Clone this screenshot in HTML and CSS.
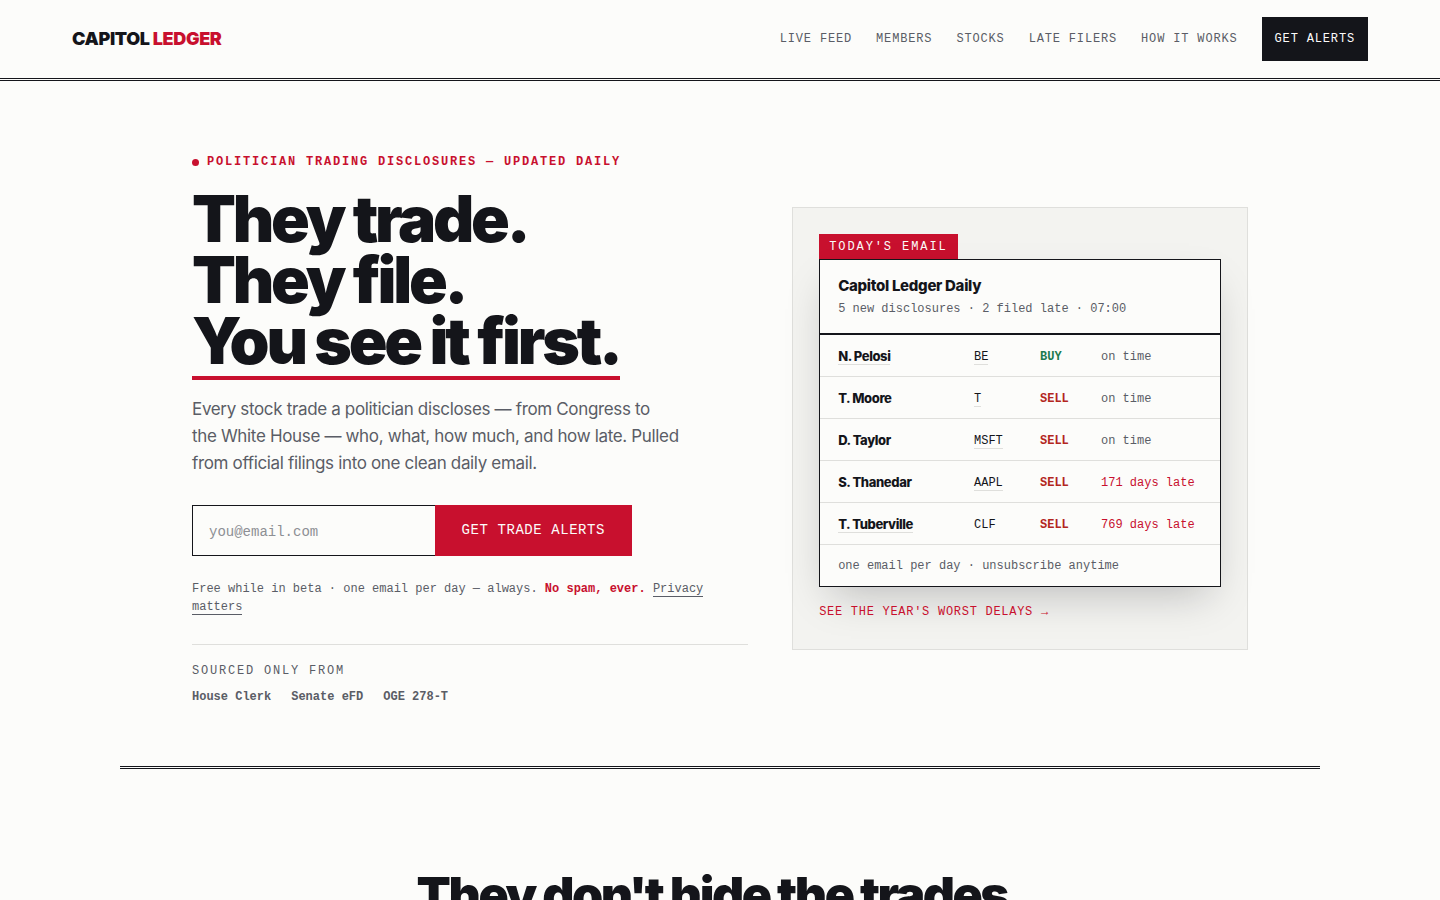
FILE: index.html
```html
<!DOCTYPE html>
<html lang="en">
<head>
    <meta charset="UTF-8">
    <meta name="viewport" content="width=device-width, initial-scale=1.0">
    <title>Capitol Ledger</title>
    <link rel="stylesheet" href="styles.css">
</head>
<body>
    <header class="header">
        <a href="#" class="logo">CAPITOL <span>LEDGER</span></a>
        <nav class="menu">
            <a href="#feed">Live feed</a>
            <a href="#members">Members</a>
            <a href="#stocks">Stocks</a>
            <a href="#late">Late filers</a>
            <a href="#how">How it works</a>
            <a href="#alerts" class="menu-cta">Get alerts</a>
        </nav>
    </header>
    <main>
        <section class="hero">
            <div class="hero-text">
                <p class="eyebrow">Politician trading disclosures — updated daily</p>
                <h1 class="hero-title">They trade.<br>They file.<br><span class="underlined">You see it first.</span></h1>
                <p class="lead">Every stock trade a politician discloses — from Congress to<br>the White House — who, what, how much, and how late. Pulled from official filings into one clean daily email.</p>
                <form class="signup" id="alerts">
                    <input type="email" class="signup-input" placeholder="you@email.com" aria-label="Email address">
                    <button type="submit" class="signup-button">Get trade alerts</button>
                </form>
                <p class="note">Free while in beta · one email per day — always. <strong>No spam, ever.</strong> <a href="#privacy">Privacy matters</a></p>
                <div class="sources">
                    <p class="sources-label">Sourced only from</p>
                    <ul class="sources-list">
                        <li>House Clerk</li>
                        <li>Senate eFD</li>
                        <li>OGE 278-T</li>
                    </ul>
                </div>
            </div>
            <aside class="preview">
                <span class="tag">Today's email</span>
                <article class="mail">
                    <header class="mail-header">
                        <h2 class="mail-title">Capitol Ledger Daily</h2>
                        <p>5 new disclosures · 2 filed late · 07:00</p>
                    </header>
                    <table class="trades">
                        <tbody>
                            <tr>
                                <th scope="row"><a href="#pelosi">N. Pelosi</a></th>
                                <td class="ticker"><a href="#be">BE</a></td>
                                <td class="side buy">BUY</td>
                                <td class="status">on time</td>
                            </tr>
                            <tr>
                                <th scope="row">T. Moore</th>
                                <td class="ticker"><a href="#t">T</a></td>
                                <td class="side sell">SELL</td>
                                <td class="status">on time</td>
                            </tr>
                            <tr>
                                <th scope="row">D. Taylor</th>
                                <td class="ticker"><a href="#msft">MSFT</a></td>
                                <td class="side sell">SELL</td>
                                <td class="status">on time</td>
                            </tr>
                            <tr>
                                <th scope="row">S. Thanedar</th>
                                <td class="ticker"><a href="#aapl">AAPL</a></td>
                                <td class="side sell">SELL</td>
                                <td class="status late">171 days late</td>
                            </tr>
                            <tr>
                                <th scope="row"><a href="#tuberville">T. Tuberville</a></th>
                                <td class="ticker">CLF</td>
                                <td class="side sell">SELL</td>
                                <td class="status late">769 days late</td>
                            </tr>
                        </tbody>
                    </table>
                    <p class="mail-footer">one email per day · unsubscribe anytime</p>
                </article>
                <a href="#late" class="more">See the year's worst delays →</a>
            </aside>
        </section>
        <section class="statement">
            <h2 class="statement-title">They don't hide the trades.</h2>
        </section>
    </main>
</body>
</html>
```
FILE: styles.css
```css
:root {
    --paper: #fcfcfa;
    --panel: #f3f3f0;
    --ink: #14151a;
    --muted: #5a5d66;
    --line: #dfdfdc;
    --red: #c8102e;
    --sans: Inter, "Liberation Sans", sans-serif;
    --mono: "Liberation Mono", monospace;
}

*,
*:before,
*:after {
    box-sizing: border-box;
}

body {
    margin: 0;
    background-color: var(--paper);
    color: var(--ink);
    font-family: var(--mono);
    font-size: 12px;
    line-height: 18px;
}

h1,
h2,
p,
ul {
    margin: 0;
    padding: 0;
}

a {
    color: inherit;
    text-decoration: none;
}

.header {
    display: flex;
    justify-content: space-between;
    align-items: center;
    padding: 17px 72px;
    border-bottom: 3px double var(--ink);
}

.logo {
    font-family: var(--sans);
    font-size: 18px;
    font-weight: 900;
    letter-spacing: -.02em;
}

.logo span {
    color: var(--red);
}

.menu {
    display: flex;
    align-items: center;
    gap: 24px;
    color: var(--muted);
    letter-spacing: .07em;
    text-transform: uppercase;
}

.menu-cta {
    padding: 13px;
    background-color: var(--ink);
    color: var(--paper);
}

.hero {
    display: grid;
    grid-template-columns: 1.22fr 1fr;
    gap: 44px;
    align-items: center;
    max-width: 1200px;
    margin: 0 auto;
    padding: 72px 72px 60px;
    border-bottom: 3px double var(--ink);
}

.eyebrow {
    display: flex;
    align-items: center;
    gap: 8px;
    color: var(--red);
    font-weight: 700;
    letter-spacing: .15em;
    text-transform: uppercase;
}

.eyebrow:before {
    content: "";
    width: 7px;
    height: 7px;
    border-radius: 50%;
    background-color: var(--red);
}

.hero-title {
    margin-top: 18px;
    font-family: var(--sans);
    font-size: 64px;
    font-weight: 900;
    line-height: .95;
    letter-spacing: -.05em;
}

.underlined {
    display: inline-block;
    padding-bottom: 5px;
    border-bottom: 4px solid var(--red);
}

.lead {
    max-width: 490px;
    margin-top: 16px;
    color: var(--muted);
    font-family: var(--sans);
    font-size: 17px;
    line-height: 27px;
    letter-spacing: -.02em;
}

.signup {
    display: flex;
    max-width: 440px;
    margin-top: 28px;
}

.signup-input {
    flex: 1;
    min-width: 0;
    padding: 17px 16px 15px;
    border: 1px solid var(--ink);
    border-right: 0;
    border-radius: 0;
    background-color: var(--paper);
    font-family: var(--mono);
    font-size: 14px;
}

.signup-input::placeholder {
    color: #8d8f94;
}

.signup-button {
    padding: 16px 27px;
    border: 0;
    background-color: var(--red);
    color: var(--paper);
    font-family: var(--mono);
    font-size: 14px;
    line-height: 19px;
    letter-spacing: .04em;
    text-transform: uppercase;
}

.note {
    margin-top: 24px;
    color: var(--muted);
}

.note strong {
    color: var(--red);
}

.note a {
    border-bottom: 1px solid var(--muted);
}

.sources {
    margin-top: 28px;
    padding-top: 17px;
    border-top: 1px solid var(--line);
    color: var(--muted);
}

.sources-label {
    letter-spacing: .15em;
    text-transform: uppercase;
}

.sources-list {
    display: flex;
    gap: 20px;
    margin-top: 8px;
    font-weight: 700;
    list-style: none;
}

.preview {
    display: flex;
    flex-direction: column;
    align-items: flex-start;
    margin-bottom: 2px;
    padding: 26px;
    border: 1px solid var(--line);
    background-color: var(--panel);
}

.tag {
    padding: 4px 10px 3px;
    background-color: var(--red);
    color: var(--paper);
    letter-spacing: .16em;
    text-transform: uppercase;
}

.mail {
    width: 100%;
    border: 1px solid var(--ink);
    background-color: var(--paper);
    box-shadow: 0 18px 40px -12px rgba(20, 21, 26, .25);
}

.mail-header {
    padding: 16px 18px 15px;
    border-bottom: 2px solid var(--ink);
    color: var(--muted);
}

.mail-title {
    margin-bottom: 4px;
    color: var(--ink);
    font-family: var(--sans);
    font-size: 15px;
    font-weight: 800;
    line-height: 20px;
    letter-spacing: -.02em;
}

.trades {
    width: 100%;
    border-collapse: collapse;
    table-layout: fixed;
}

.trades th,
.trades td {
    height: 42px;
    padding: 0;
    border-bottom: 1px solid var(--line);
    text-align: left;
}

.trades td {
    padding-top: 2px;
}

.trades th {
    padding-left: 18px;
    font-family: var(--sans);
    font-size: 13px;
    font-weight: 800;
    letter-spacing: -.03em;
}

.trades a {
    border-bottom: 1px solid var(--line);
}

.trades .ticker {
    width: 66px;
}

.trades .side {
    width: 61px;
    font-weight: 700;
}

.trades .status {
    width: 119px;
    color: var(--muted);
}

.trades .buy {
    color: #1c7a4f;
}

.trades .sell {
    color: #b3261e;
}

.trades .late {
    color: var(--red);
}

.mail-footer {
    padding: 12px 18px 11px;
    color: var(--muted);
}

.more {
    margin-top: 14px;
    padding: 2px 0;
    color: var(--red);
    letter-spacing: .06em;
    text-transform: uppercase;
}

.statement {
    max-width: 1200px;
    margin: 0 auto;
    padding: 98px 72px;
    text-align: center;
}

.statement-title {
    font-family: var(--sans);
    font-size: 50px;
    font-weight: 900;
    line-height: 56px;
    letter-spacing: -.05em;
}
```
